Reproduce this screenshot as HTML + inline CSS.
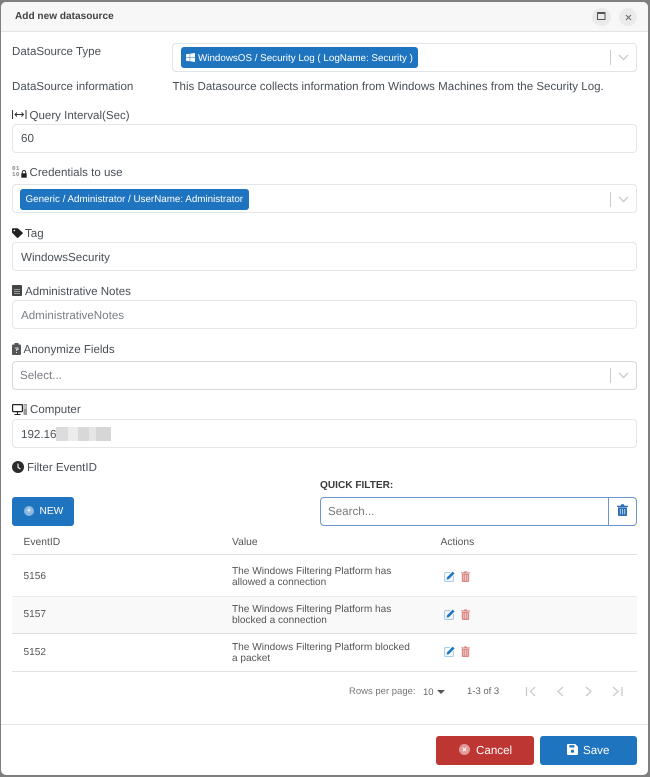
<!DOCTYPE html>
<html><head><meta charset="utf-8">
<style>
html,body{margin:0;padding:0}
body{width:650px;height:777px;background:#7f7f7f;position:relative;overflow:hidden;font-family:"Liberation Sans",sans-serif;color:#4f5467;text-rendering:geometricPrecision}
.a{position:absolute;white-space:nowrap}
.t{position:absolute;white-space:nowrap;font-size:11.55px;line-height:16px;color:#495057}
.i{position:absolute;left:12px;width:623px;height:27px;border:1px solid #e3e6ea;border-radius:4px;background:#fff;box-sizing:content-box}
.v{position:absolute;white-space:nowrap;font-size:11.6px;line-height:16px;color:#495057}
.chip{position:absolute;background:#1f74bf;border-radius:3px;color:#fff;font-size:9.82px;line-height:21px;height:21px;white-space:nowrap}
.sep{position:absolute;width:1px;height:15px;background:#ccc}
svg{position:absolute;display:block}
.th{position:absolute;font-size:10.3px;line-height:14px;color:#555;white-space:nowrap}
.td{position:absolute;font-size:10.1px;line-height:11.5px;color:#555;white-space:nowrap}
.ln{position:absolute;left:12px;width:625px;height:1px;background:#e2e2e2}
</style></head><body>
<div style="position:absolute;left:0;top:0;width:650px;height:777px;filter:blur(0.25px)">
<div style="position:absolute;left:1px;top:2px;width:647px;height:773px;background:#fff;border-radius:5px"></div>
<div style="position:absolute;left:1px;top:2px;width:647px;height:30px;background:#f7f7f7;border-bottom:1px solid #e3e3e3;border-radius:5px 5px 0 0;box-sizing:border-box"></div>
<div class="a" style="left:15px;top:10px;font-size:10.1px;line-height:14px;font-weight:bold;color:#444">Add new datasource</div>
<div style="position:absolute;left:592px;top:8px;width:19px;height:18px;border-radius:50%;background:#ebebeb"></div>
<div style="position:absolute;left:619px;top:8px;width:18px;height:18px;border-radius:50%;background:#ebebeb"></div>
<svg style="left:597px;top:12px" width="9" height="9" viewBox="0 0 9 9"><rect x=".5" y=".5" width="7.5" height="7" fill="none" stroke="#555"/><rect x="0" y="0" width="8.5" height="2" fill="#555"/></svg>
<svg style="left:625px;top:14px" width="7" height="7" viewBox="0 0 7 7"><path d="M1 1L6 6M6 1L1 6" stroke="#666" stroke-width="1"/></svg>

<div class="t" style="left:12px;top:44px">DataSource Type</div>
<div style="position:absolute;left:172px;top:43px;width:465px;height:29px;border:1px solid #e0e3e7;border-radius:4px;box-sizing:border-box;background:#fff"></div>
<div class="chip" style="left:181px;top:47px;width:237px"><span class="a" style="left:17px;top:1px">WindowsOS / Security Log ( LogName: Security )</span></div>
<svg style="left:186px;top:53px" width="9" height="9" viewBox="0 0 9 9"><path d="M0 1.3L3.7.8V4.2H0ZM4.2.7L9 0V4.2H4.2ZM0 4.7H3.7V8.2L0 7.7ZM4.2 4.7H9V9L4.2 8.3Z" fill="#fff"/></svg>
<div class="sep" style="left:610px;top:50px"></div>
<svg style="left:618px;top:54px" width="11" height="7" viewBox="0 0 11 7"><path d="M1 1L5.5 5.5L10 1" fill="none" stroke="#ccc" stroke-width="1.4"/></svg>

<div class="t" style="left:12px;top:79px">DataSource information</div>
<div class="t" style="left:172.5px;top:79px">This Datasource collects information from Windows Machines from the Security Log.</div>

<svg style="left:12px;top:110px" width="15" height="9" viewBox="0 0 15 9"><path d="M.5 0V9M14 0V9" stroke="#333" stroke-width="1"/><path d="M3 4.5H11.5M5 2.5L3 4.5L5 6.5M9.5 2.5L11.5 4.5L9.5 6.5" fill="none" stroke="#333" stroke-width="1"/></svg>
<div class="t" style="left:29.5px;top:107.5px">Query Interval(Sec)</div>
<div class="i" style="top:124px"></div>
<div class="v" style="left:21px;top:131px">60</div>

<div class="a" style="left:12px;top:166px;font-size:6px;line-height:6px;font-weight:bold;color:#888;letter-spacing:.3px;font-family:'Liberation Mono',monospace">01<br>10</div>
<svg style="left:21px;top:170px" width="6" height="8" viewBox="0 0 6 8"><path d="M1.3 3.5V2.2a1.7 1.7 0 0 1 3.4 0V3.5" fill="none" stroke="#222" stroke-width=".9"/><rect x=".3" y="3.3" width="5.4" height="4.4" fill="#222"/></svg>
<div class="t" style="left:29.5px;top:165px">Credentials to use</div>
<div class="i" style="top:184px"></div>
<div class="chip" style="left:20px;top:189px;width:229px"><span class="a" style="left:5.5px;top:0">Generic / Administrator / UserName: Administrator</span></div>
<div class="sep" style="left:610px;top:192px"></div>
<svg style="left:618px;top:196px" width="11" height="7" viewBox="0 0 11 7"><path d="M1 1L5.5 5.5L10 1" fill="none" stroke="#ccc" stroke-width="1.4"/></svg>

<svg style="left:12px;top:228px" width="11" height="10" viewBox="0 0 11 10"><path d="M0 1V4.6L5 9.7a.8.8 0 0 0 1.1 0L10.6 5.6a.8.8 0 0 0 0-1.1L5.7.2H.8a.8.8 0 0 0-.8.8Z" fill="#222"/><circle cx="2.4" cy="2.5" r=".8" fill="#fff"/></svg>
<div class="t" style="left:25px;top:226px">Tag</div>
<div class="i" style="top:242px"></div>
<div class="v" style="left:21px;top:250px">WindowsSecurity</div>

<svg style="left:12px;top:285px" width="10" height="11" viewBox="0 0 10 11"><rect width="10" height="11" rx="1" fill="#444"/><path d="M2 4.5H8M2 6.5H8M2 8.5H8" stroke="#bbb" stroke-width=".8"/></svg>
<div class="t" style="left:25px;top:284px">Administrative Notes</div>
<div class="i" style="top:300px"></div>
<div class="v" style="left:21px;top:308px;color:#7a7f85">AdministrativeNotes</div>

<svg style="left:12px;top:343px" width="9" height="12" viewBox="0 0 9 12"><rect y="1.5" width="9" height="10.5" rx="1" fill="#555"/><rect x="2.5" y="0" width="4" height="3" fill="#555"/><path d="M3 5h3v1.6H4.5V8" fill="none" stroke="#ddd" stroke-width=".9"/><rect x="4" y="9" width="1" height="1" fill="#ddd"/></svg>
<div class="t" style="left:23.5px;top:342px">Anonymize Fields</div>
<div class="i" style="top:361px;border-color:#d5d9de"></div>
<div class="v" style="left:20px;top:368px;color:#7a7f85">Select...</div>
<div class="sep" style="left:610px;top:368px"></div>
<svg style="left:618px;top:372px" width="11" height="7" viewBox="0 0 11 7"><path d="M1 1L5.5 5.5L10 1" fill="none" stroke="#ccc" stroke-width="1.4"/></svg>

<svg style="left:12px;top:404px" width="15" height="11" viewBox="0 0 15 11"><rect x=".6" y=".6" width="9.8" height="7" rx=".6" fill="#fff" stroke="#222" stroke-width="1.2"/><path d="M5.5 8V10M2.5 10.5H8.5" stroke="#222" stroke-width="1.1"/><rect x="11.5" y="0" width="3.5" height="11" fill="#999"/><path d="M12 2H14.5M12 4H14.5" stroke="#fff" stroke-width=".7"/></svg>
<div class="t" style="left:30px;top:402px">Computer</div>
<div class="i" style="top:419px"></div>
<div class="v" style="left:21px;top:427px">192.16</div>
<div style="position:absolute;left:56px;top:427px;width:55px;height:14px;background:linear-gradient(90deg,#dcdcdc 0 12px,#ececec 12px 22px,#d8d8d8 22px 33px,#e6e6e6 33px 40px,#d6d6d6 40px 55px)"></div>

<svg style="left:12px;top:461px" width="12" height="12" viewBox="0 0 12 12"><circle cx="6" cy="6" r="6" fill="#2b2b2b"/><path d="M6 2.6V6.3L8.4 8" fill="none" stroke="#fff" stroke-width="1.1"/></svg>
<div class="t" style="left:27px;top:460px">Filter EventID</div>

<div class="a" style="left:320px;top:479px;font-size:10.1px;line-height:13px;font-weight:bold;color:#3a3a3a">QUICK FILTER:</div>
<div style="position:absolute;left:320px;top:497px;width:317px;height:29px;border:1px solid #6b97cc;border-radius:4px;box-sizing:border-box;background:#fff"></div>
<div style="position:absolute;left:608px;top:497px;width:1px;height:29px;background:#6b97cc"></div>
<div class="a" style="left:328px;top:504px;font-size:11.6px;line-height:16px;color:#777">Search...</div>
<svg style="left:617px;top:504px" width="11" height="12" viewBox="0 0 11 12"><path d="M0 1.8H11V3H0ZM3.5 1.8L4.2.3H6.8L7.5 1.8Z" fill="#2a6fb5"/><path d="M1 3.4H10V11a1 1 0 0 1-1 1H2a1 1 0 0 1-1-1Z" fill="#2a6fb5"/><path d="M3.3 5V10.4M5.5 5V10.4M7.7 5V10.4" stroke="#cfe0f0" stroke-width=".8"/></svg>

<div style="position:absolute;left:12px;top:497px;width:62px;height:29px;background:#1f74bf;border-radius:3px"></div>
<div style="position:absolute;left:24px;top:506px;width:10px;height:10px;border-radius:50%;background:#8ab8e0"></div>
<div class="a" style="left:26px;top:505px;width:6px;text-align:center;font-size:9px;line-height:11px;color:#fff">+</div>
<div class="a" style="left:39.5px;top:505px;font-size:10.2px;line-height:14px;color:#fff;font-weight:normal">NEW</div>

<div class="th" style="left:23.5px;top:536px">EventID</div>
<div class="th" style="left:232px;top:536px">Value</div>
<div class="th" style="left:440.5px;top:536px">Actions</div>
<div class="ln" style="top:554px"></div>

<div style="position:absolute;left:12px;top:596px;width:625px;height:37px;background:#f9f9f9"></div>
<div class="ln" style="top:596px;background:#ececec"></div>
<div class="ln" style="top:633px;background:#dedede"></div>
<div class="ln" style="top:671px"></div>

<div class="td" style="left:23.5px;top:571px">5156</div>
<div class="td" style="left:232px;top:565.5px">The Windows Filtering Platform has<br>allowed a connection</div>
<div class="td" style="left:23.5px;top:608.5px">5157</div>
<div class="td" style="left:232px;top:603.5px">The Windows Filtering Platform has<br>blocked a connection</div>
<div class="td" style="left:23.5px;top:646.5px">5152</div>
<div class="td" style="left:232px;top:641.5px">The Windows Filtering Platform blocked<br>a packet</div>

<svg style="left:444px;top:571px" width="11" height="11" viewBox="0 0 11 11"><path d="M6 1.6H1.6a1 1 0 0 0-1 1V9.4a1 1 0 0 0 1 1H8.4a1 1 0 0 0 1-1V5" fill="none" stroke="#a9cdec" stroke-width="1.1"/><path d="M3 6.4L8.6.6L10.6 2.4L4.8 8.2L2.6 8.6Z" fill="#1f74bf"/></svg>
<svg style="left:461px;top:571px" width="9" height="11" viewBox="0 0 9 11"><path d="M0 1.4H9V2.4H0ZM3 1.4L3.4.3H5.6L6 1.4Z" fill="#d98a88"/><path d="M.8 2.8H8.2V10a1 1 0 0 1-1 1H1.8a1 1 0 0 1-1-1Z" fill="#d98a88"/><path d="M2.8 4V9.8M4.5 4V9.8M6.2 4V9.8" stroke="#f6dddc" stroke-width=".7"/></svg>
<svg style="left:444px;top:609px" width="11" height="11" viewBox="0 0 11 11"><path d="M6 1.6H1.6a1 1 0 0 0-1 1V9.4a1 1 0 0 0 1 1H8.4a1 1 0 0 0 1-1V5" fill="none" stroke="#a9cdec" stroke-width="1.1"/><path d="M3 6.4L8.6.6L10.6 2.4L4.8 8.2L2.6 8.6Z" fill="#1f74bf"/></svg>
<svg style="left:461px;top:609px" width="9" height="11" viewBox="0 0 9 11"><path d="M0 1.4H9V2.4H0ZM3 1.4L3.4.3H5.6L6 1.4Z" fill="#d98a88"/><path d="M.8 2.8H8.2V10a1 1 0 0 1-1 1H1.8a1 1 0 0 1-1-1Z" fill="#d98a88"/><path d="M2.8 4V9.8M4.5 4V9.8M6.2 4V9.8" stroke="#f6dddc" stroke-width=".7"/></svg>
<svg style="left:444px;top:646px" width="11" height="11" viewBox="0 0 11 11"><path d="M6 1.6H1.6a1 1 0 0 0-1 1V9.4a1 1 0 0 0 1 1H8.4a1 1 0 0 0 1-1V5" fill="none" stroke="#a9cdec" stroke-width="1.1"/><path d="M3 6.4L8.6.6L10.6 2.4L4.8 8.2L2.6 8.6Z" fill="#1f74bf"/></svg>
<svg style="left:461px;top:646px" width="9" height="11" viewBox="0 0 9 11"><path d="M0 1.4H9V2.4H0ZM3 1.4L3.4.3H5.6L6 1.4Z" fill="#d98a88"/><path d="M.8 2.8H8.2V10a1 1 0 0 1-1 1H1.8a1 1 0 0 1-1-1Z" fill="#d98a88"/><path d="M2.8 4V9.8M4.5 4V9.8M6.2 4V9.8" stroke="#f6dddc" stroke-width=".7"/></svg>

<div class="a" style="left:349px;top:685px;font-size:9.5px;line-height:13px;color:#777">Rows per page:</div>
<div class="a" style="left:423px;top:686px;font-size:9.5px;line-height:13px;color:#666">10</div>
<svg style="left:437px;top:690px" width="8" height="4" viewBox="0 0 8 4"><path d="M0 0H8L4 4Z" fill="#555"/></svg>
<div class="a" style="left:467px;top:685px;font-size:9.5px;line-height:13px;color:#666">1-3 of 3</div>
<svg style="left:524px;top:685px" width="100" height="13" viewBox="0 0 100 13" fill="none" stroke="#c9c9c9" stroke-width="1.2"><path d="M2.5 2V11M11 2L6.5 6.5L11 11"/><path d="M39 2L34 6.5L39 11"/><path d="M62 2L67 6.5L62 11"/><path d="M89 2L94 6.5L89 11M98 2V11"/></svg>

<div style="position:absolute;left:1px;top:724px;width:647px;height:1px;background:#e3e3e3"></div>

<div style="position:absolute;left:436px;top:736px;width:98px;height:29px;background:#bd3632;border-radius:3px"></div>
<div style="position:absolute;left:459px;top:744px;width:11px;height:11px;border-radius:50%;background:#e09a98"></div>
<svg style="left:462px;top:747px" width="5" height="5" viewBox="0 0 5 5"><path d="M.8.8L4.2 4.2M4.2.8L.8 4.2" stroke="#fff" stroke-width="1"/></svg>
<div class="a" style="left:476px;top:743px;font-size:11.6px;line-height:16px;color:#fff">Cancel</div>

<div style="position:absolute;left:540px;top:736px;width:97px;height:29px;background:#1f74bf;border-radius:3px"></div>
<svg style="left:567px;top:744px" width="11" height="11" viewBox="0 0 11 11"><path d="M1 0H8.3L11 2.7V10a1 1 0 0 1-1 1H1a1 1 0 0 1-1-1V1a1 1 0 0 1 1-1Z" fill="#fff"/><rect x="2.4" y="1.2" width="5" height="2.3" fill="#1f74bf"/><circle cx="5.5" cy="7.2" r="1.6" fill="#1f74bf"/></svg>
<div class="a" style="left:583px;top:743px;font-size:11.6px;line-height:16px;color:#fff">Save</div>
</div>
</body></html>
